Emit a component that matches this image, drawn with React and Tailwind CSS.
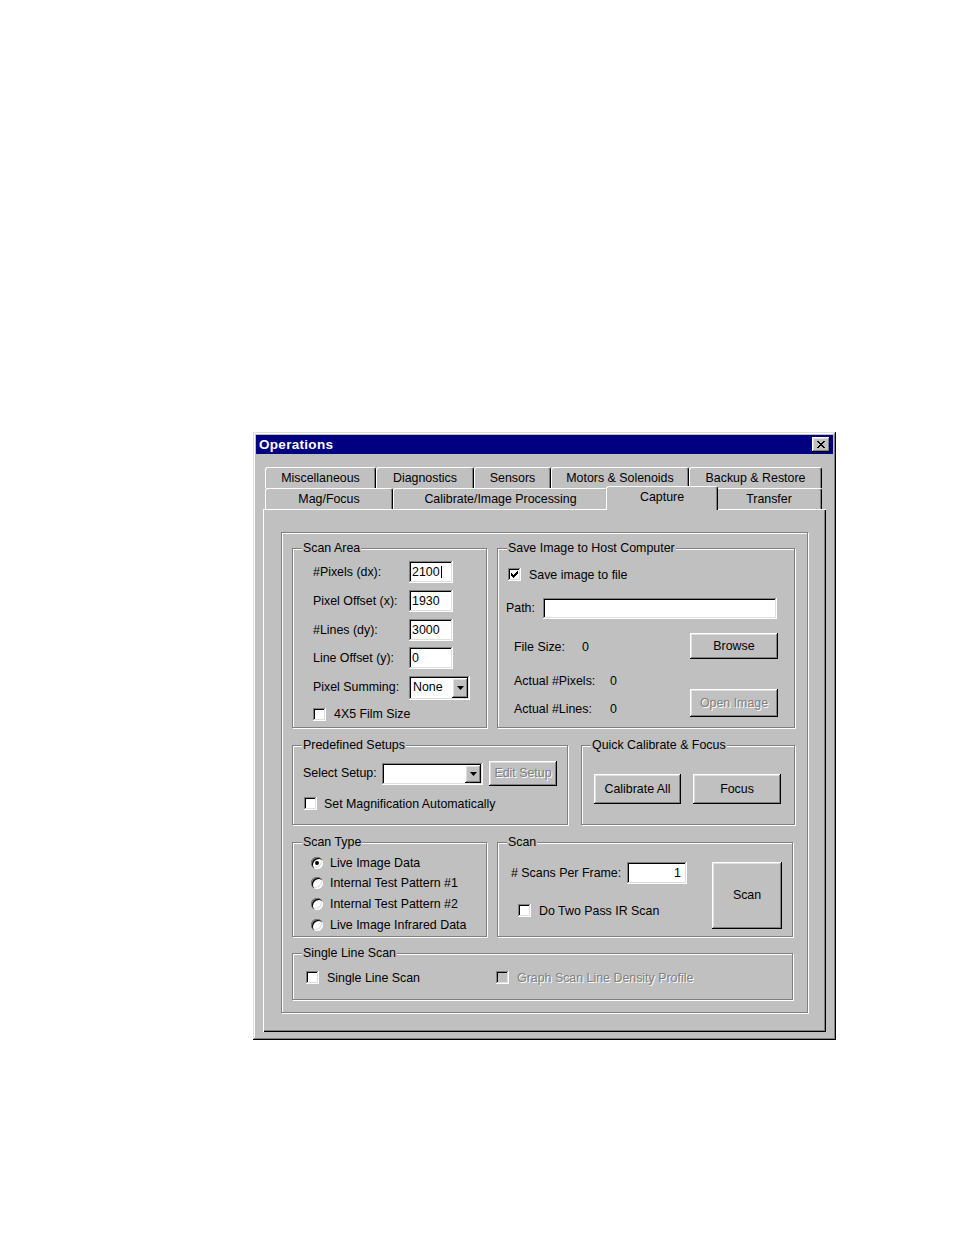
import React from "react";

const RAISED =
  "shadow-[inset_-1px_-1px_#000,inset_1px_1px_#fff,inset_-2px_-2px_#808080,inset_2px_2px_#dfdfdf]";
const SUNKEN =
  "shadow-[inset_-1px_-1px_#fff,inset_1px_1px_#808080,inset_-2px_-2px_#dfdfdf,inset_2px_2px_#000]";
const DIS = "text-[#808080] [text-shadow:1px_1px_0_#fff]";

function Group({ title, className = "", children }) {
  return (
    <div
      className={`relative border border-[#808080] shadow-[inset_1px_1px_#fff,1px_1px_#fff] shrink-0 ${className}`}
    >
      <span className="absolute left-[9px] top-[-8px] bg-[#c0c0c0] px-[1px] leading-[15px] whitespace-nowrap">
        {title}
      </span>
      {children}
    </div>
  );
}

function Field({ className = "", children }) {
  return (
    <div className={`${SUNKEN} bg-white flex items-center pl-[3px] shrink-0 ${className}`}>
      {children}
    </div>
  );
}

function Btn({ className = "", disabled, children }) {
  return (
    <div
      className={`${RAISED} bg-[#c0c0c0] flex items-center justify-center shrink-0 whitespace-nowrap ${
        disabled ? DIS : ""
      } ${className}`}
    >
      {children}
    </div>
  );
}

function Check({ checked, disabled }) {
  return (
    <div
      className={`w-[13px] h-[13px] shrink-0 ${SUNKEN} ${
        disabled ? "bg-[#c0c0c0]" : "bg-white"
      } flex items-center justify-center`}
    >
      {checked && (
        <svg width="7" height="7" viewBox="0 0 7 7" shapeRendering="crispEdges">
          <path d="M0 2h1v1h1v1h1v-1h1v-1h1v-1h1v-1h1v3h-1v1h-1v1h-1v1h-1v1h-1v-1h-1v-1h-1z" fill="#000" />
        </svg>
      )}
    </div>
  );
}

function Radio({ checked }) {
  return (
    <div className="w-[12px] h-[12px] rounded-full bg-white shrink-0 shadow-[inset_1px_1px_#808080,inset_2px_2px_#000,inset_-1px_-1px_#fff,inset_-2px_-2px_#dfdfdf] flex items-center justify-center">
      {checked && <div className="w-[4px] h-[4px] rounded-full bg-black" />}
    </div>
  );
}

function Arrow() {
  return (
    <svg width="7" height="4" viewBox="0 0 7 4">
      <path d="M0 0h7L3.5 4z" fill="#000" />
    </svg>
  );
}

function Combo({ className = "", value }) {
  return (
    <div className={`${SUNKEN} bg-white flex items-center justify-between p-[2px] shrink-0 ${className}`}>
      <span className="pl-[2px]">{value}</span>
      <div className={`${RAISED} bg-[#c0c0c0] w-[16px] h-full flex items-center justify-center`}>
        <Arrow />
      </div>
    </div>
  );
}

const TAB =
  "h-[21px] flex items-center justify-center whitespace-nowrap bg-[#c0c0c0] border-t border-l border-white border-r border-r-black rounded-t-[3px] shadow-[inset_-1px_0_#808080] shrink-0 pt-[1px]";

export default function App() {
  return (
    <div className="w-[954px] h-[1235px] bg-white pt-[432px] pl-[253px] text-black font-['Liberation_Sans',Arial,sans-serif] text-[12.4px] leading-none">
      {/* Dialog */}
      <div className="w-[583px] h-[608px] bg-[#c0c0c0] p-[3px] shadow-[inset_-1px_-1px_#000,inset_1px_1px_#dfdfdf,inset_-2px_-2px_#808080,inset_2px_2px_#fff]">
        {/* Title bar */}
        <div className="h-[19px] bg-[#000080] flex items-center justify-between pl-[3px] pr-[3px]">
          <span className="text-white font-bold text-[13.5px] tracking-[0.3px]">Operations</span>
          <div className={`${RAISED} bg-[#c0c0c0] w-[18px] h-[15px] flex items-center justify-center`}>
            <svg width="8" height="7" viewBox="0 0 8 7" shapeRendering="crispEdges">
              <path
                d="M0 0h2v1h1v1h2v-1h1v-1h2v1h-1v1h-1v1h-1v1h1v1h1v1h1v1h-2v-1h-1v-1h-2v1h-1v1h-2v-1h1v-1h1v-1h1v-1h-1v-1h-1v-1h-1z"
                fill="#000"
              />
            </svg>
          </div>
        </div>

        {/* Tab control */}
        <div className="mt-[13px] ml-[7px] w-[563px]">
          <div className="flex pl-[2px] h-[21px]">
            <div className={`${TAB} w-[111px]`}>Miscellaneous</div>
            <div className={`${TAB} w-[98px]`}>Diagnostics</div>
            <div className={`${TAB} w-[77px]`}>Sensors</div>
            <div className={`${TAB} w-[138px]`}>Motors &amp; Solenoids</div>
            <div className={`${TAB} w-[133px]`}>Backup &amp; Restore</div>
          </div>
          <div className="flex items-end pl-[2px] h-[21px]">
            <div className={`${TAB} w-[128px]`}>Mag/Focus</div>
            <div className={`${TAB} w-[215px]`}>Calibrate/Image Processing</div>
            <div className="relative z-10 w-[112px] h-[24px] -mx-[2px] -mb-[1px] pb-[3px] flex items-center justify-center bg-[#c0c0c0] border-t border-l border-white border-r border-r-black rounded-t-[3px] shadow-[inset_-1px_0_#808080] shrink-0">
              Capture
            </div>
            <div className={`${TAB} w-[106px]`}>Transfer</div>
          </div>

          {/* Panel */}
          <div className="h-[523px] w-[563px] bg-[#c0c0c0] shadow-[inset_1px_1px_#fff,inset_-1px_-1px_#000,inset_-2px_-2px_#808080] pt-[23px] pl-[18px]">
            <div className="w-[527px] h-[481px] border border-[#808080] shadow-[inset_1px_1px_#fff,1px_1px_#fff] pt-[15px] pl-[10px] flex flex-col">
              {/* Row A */}
              <div className="flex gap-[10px]">
                <Group title="Scan Area" className="w-[195px] h-[180px]">
                  <div className="flex flex-col pl-[20px] pt-[12px]">
                    <div className="flex items-center h-[22px]">
                      <span className="w-[96px] shrink-0">#Pixels (dx):</span>
                      <Field className="w-[44px] h-[22px]">
                        <span className="border-r border-black pr-[1px]">2100</span>
                      </Field>
                    </div>
                    <div className="flex items-center h-[22px] mt-[7px]">
                      <span className="w-[96px] shrink-0">Pixel Offset (x):</span>
                      <Field className="w-[44px] h-[22px]">1930</Field>
                    </div>
                    <div className="flex items-center h-[22px] mt-[7px]">
                      <span className="w-[96px] shrink-0">#Lines (dy):</span>
                      <Field className="w-[44px] h-[22px]">3000</Field>
                    </div>
                    <div className="flex items-center h-[22px] mt-[6px]">
                      <span className="w-[96px] shrink-0">Line Offset (y):</span>
                      <Field className="w-[44px] h-[22px]">0</Field>
                    </div>
                    <div className="flex items-center h-[23px] mt-[7px]">
                      <span className="w-[96px] shrink-0">Pixel Summing:</span>
                      <Combo className="w-[61px] h-[24px]" value="None" />
                    </div>
                    <div className="flex items-center h-[13px] mt-[9px] gap-[8px]">
                      <Check />
                      <span>4X5 Film Size</span>
                    </div>
                  </div>
                </Group>

                <Group title="Save Image to Host Computer" className="w-[298px] h-[180px]">
                  <div className="flex flex-col pl-[8px]">
                    <div className="flex items-center h-[13px] mt-[19px] ml-[2px] gap-[8px]">
                      <Check checked />
                      <span className="pt-[1px]">Save image to file</span>
                    </div>
                    <div className="flex items-center h-[21px] mt-[17px]">
                      <span className="w-[37px] shrink-0">Path:</span>
                      <Field className="w-[234px] h-[21px]" />
                    </div>
                    <div className="flex mt-[14px]">
                      <div className="w-[184px] pl-[8px] pt-[1px] flex flex-col shrink-0">
                        <div className="flex items-center h-[26px]">
                          <span className="w-[68px] shrink-0">File Size:</span>
                          <span>0</span>
                        </div>
                        <div className="flex items-center h-[20px] mt-[11px]">
                          <span className="w-[96px] shrink-0">Actual #Pixels:</span>
                          <span>0</span>
                        </div>
                        <div className="flex items-center h-[20px] mt-[8px]">
                          <span className="w-[96px] shrink-0">Actual #Lines:</span>
                          <span>0</span>
                        </div>
                      </div>
                      <div className="flex flex-col">
                        <Btn className="w-[88px] h-[26px]">Browse</Btn>
                        <Btn className="w-[88px] h-[28px] mt-[30px]" disabled>
                          Open Image
                        </Btn>
                      </div>
                    </div>
                  </div>
                </Group>
              </div>

              {/* Row B */}
              <div className="flex mt-[17px]">
                <Group title="Predefined Setups" className="w-[276px] h-[80px]">
                  <div className="flex flex-col pl-[10px] pt-[15px]">
                    <div className="flex items-center h-[25px]">
                      <span className="w-[79px] shrink-0">Select Setup:</span>
                      <Combo className="w-[101px] h-[22px]" value="" />
                      <Btn className="w-[68px] h-[25px] ml-[6px]" disabled>
                        Edit Setup
                      </Btn>
                    </div>
                    <div className="flex items-center h-[13px] mt-[11px] ml-[1px] gap-[7px]">
                      <Check />
                      <span className="pt-[1px]">Set Magnification Automatically</span>
                    </div>
                  </div>
                </Group>
                <Group title="Quick Calibrate & Focus" className="w-[214px] h-[80px] ml-[13px]">
                  <div className="flex pl-[12px] pt-[28px] gap-[12px]">
                    <Btn className="w-[87px] h-[30px]">Calibrate All</Btn>
                    <Btn className="w-[88px] h-[30px]">Focus</Btn>
                  </div>
                </Group>
              </div>

              {/* Row C */}
              <div className="flex mt-[17px]">
                <Group title="Scan Type" className="w-[195px] h-[95px]">
                  <div className="flex flex-col pl-[18px] pt-[10px]">
                    <div className="flex items-center h-[20px] gap-[7px]">
                      <Radio checked />
                      <span>Live Image Data</span>
                    </div>
                    <div className="flex items-center h-[20px] gap-[7px]">
                      <Radio />
                      <span>Internal Test Pattern #1</span>
                    </div>
                    <div className="flex items-center h-[20px] gap-[7px] mt-[1px]">
                      <Radio />
                      <span>Internal Test Pattern #2</span>
                    </div>
                    <div className="flex items-center h-[20px] gap-[7px] mt-[1px]">
                      <Radio />
                      <span>Live Image Infrared Data</span>
                    </div>
                  </div>
                </Group>
                <Group title="Scan" className="w-[296px] h-[95px] ml-[10px]">
                  <div className="flex pl-[13px] pt-[19px]">
                    <div className="w-[176px] flex flex-col shrink-0">
                      <div className="flex items-center h-[22px]">
                        <span className="w-[116px] shrink-0"># Scans Per Frame:</span>
                        <Field className="w-[60px] h-[22px] justify-end pr-[6px]">1</Field>
                      </div>
                      <div className="flex items-center h-[13px] mt-[20px] ml-[7px] gap-[8px]">
                        <Check />
                        <span className="pt-[1px]">Do Two Pass IR Scan</span>
                      </div>
                    </div>
                    <Btn className="w-[70px] h-[67px] ml-[25px]">Scan</Btn>
                  </div>
                </Group>
              </div>

              {/* Row D */}
              <Group title="Single Line Scan" className="w-[501px] h-[47px] mt-[16px]">
                <div className="flex pl-[13px] pt-[16px]">
                  <div className="w-[190px] flex items-center h-[14px] gap-[8px] shrink-0">
                    <Check />
                    <span className="pt-[2px]">Single Line Scan</span>
                  </div>
                  <div className="flex items-center h-[14px] gap-[8px]">
                    <Check disabled />
                    <span className={`${DIS} pt-[2px]`}>Graph Scan Line Density Profile</span>
                  </div>
                </div>
              </Group>
            </div>
          </div>
        </div>
      </div>
    </div>
  );
}
